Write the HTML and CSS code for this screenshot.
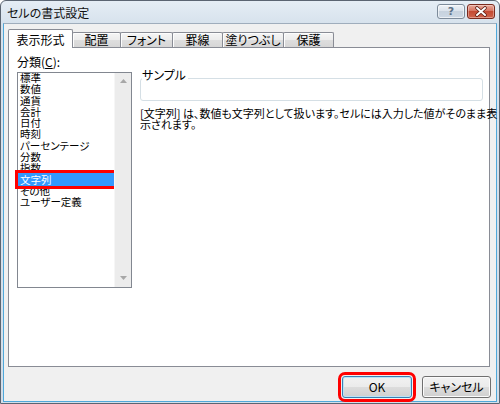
FILE: index.html
```html
<!DOCTYPE html>
<html lang="ja">
<head>
<meta charset="utf-8">
<title>セルの書式設定</title>
<link rel="stylesheet" href="styles.css">
</head>
<body>
<div class="window">
  <div class="titlebar">
    <span class="title">セルの書式設定</span>
    <div class="caption-btns">
      <span class="cap-btn help">?</span>
      <span class="cap-btn close">
        <svg width="26" height="13" viewBox="0 0 26 13">
          <path d="M9 3 L17 10 M17 3 L9 10" stroke="#5a1a12" stroke-width="3.6" stroke-linecap="round" fill="none"/>
          <path d="M9 3 L17 10 M17 3 L9 10" stroke="#ffffff" stroke-width="2" stroke-linecap="round" fill="none"/>
        </svg>
      </span>
    </div>
  </div>
  <div class="client">
    <div class="tabs">
      <div class="tab tab-1 active">表示形式</div>
      <div class="tab tab-2">配置</div>
      <div class="tab tab-3">フォント</div>
      <div class="tab tab-4">罫線</div>
      <div class="tab tab-5">塗りつぶし</div>
      <div class="tab tab-6">保護</div>
    </div>
    <div class="panel">
      <div class="left-col">
        <div class="cat-label">分類(<u>C</u>):</div>
        <div class="listbox">
          <ul class="items">
            <li>標準</li>
            <li>数値</li>
            <li>通貨</li>
            <li>会計</li>
            <li>日付</li>
            <li>時刻</li>
            <li>パーセンテージ</li>
            <li>分数</li>
            <li>指数</li>
            <li class="sel">文字列</li>
            <li>その他</li>
            <li>ユーザー定義</li>
          </ul>
          <div class="scrollbar">
            <svg width="7" height="4" viewBox="0 0 7 4"><path d="M0 4 L3.5 0 L7 4 Z" fill="#a7a7a7"/></svg>
            <svg width="7" height="4" viewBox="0 0 7 4"><path d="M0 0 L7 0 L3.5 4 Z" fill="#a7a7a7"/></svg>
          </div>
        </div>
      </div>
      <div class="right-col">
        <fieldset class="sample">
          <legend>サンプル</legend>
          <div class="sample-body"></div>
        </fieldset>
        <p class="desc">[文字列] は、数値も文字列として扱います。セルには入力した値がそのまま表<br>示されます。</p>
      </div>
    </div>
    <div class="buttons">
      <button class="btn btn-ok">OK</button>
      <button class="btn btn-cancel">キャンセル</button>
    </div>
  </div>
</div>
</body>
</html>
```
FILE: styles.css
```css
html, body {
  margin: 0;
  padding: 0;
  background: #ffffff;
}
body {
  font-family: "Noto Sans CJK JP", "Noto Sans", sans-serif;
  font-feature-settings: "palt";
  font-size: 12px;
  color: #000;
}
.window {
  width: 500px;
  height: 404px;
  box-sizing: border-box;
  border: 1px solid #5b6572;
  border-radius: 6px 6px 0 0;
  background: linear-gradient(#e5edf5, #d6e1ec 24px, #d3dee9);
  padding: 0 2px 1px 2px;
  display: flex;
  flex-direction: column;
}
.titlebar {
  height: 22px;
  display: flex;
  align-items: center;
  justify-content: space-between;
  padding: 0 2px 0 4px;
}
.title {
  font-size: 12px;
  line-height: 14px;
  padding-top: 1px;
  color: #111;
}
.caption-btns {
  display: flex;
  gap: 2px;
  align-self: flex-start;
  margin-top: 3px;
}
.cap-btn {
  box-sizing: border-box;
  width: 28px;
  height: 15px;
  border-radius: 3px;
  display: flex;
  align-items: center;
  justify-content: center;
}
.help {
  border: 1px solid #7d8b9a;
  background: linear-gradient(#eef2f7, #d9e1ea 50%, #c7d2de 50%, #cdd8e4);
  box-shadow: inset 0 0 0 1px rgba(255,255,255,0.6);
  color: #5e7288;
  font-family: "DejaVu Sans", sans-serif;
  font-weight: bold;
  font-size: 11px;
  line-height: 13px;
}
.close {
  border: 1px solid #7a2a1e;
  background: linear-gradient(#e9a99b, #d77562 45%, #c44a33 50%, #d0644c);
  box-shadow: inset 0 0 0 1px rgba(255,255,255,0.35);
}
.client {
  flex: 1;
  background: #f0f0f0;
  border: 1px solid #4fa8da;
  border-top-color: #9fadbc;
  padding: 5px 6px 3px 4px;
  display: flex;
  flex-direction: column;
}
.tabs {
  display: flex;
  align-items: flex-end;
  height: 18px;
}
.tab {
  box-sizing: border-box;
  height: 15px;
  border: 1px solid #898c95;
  border-bottom: none;
  border-radius: 2px 2px 0 0;
  margin-left: -1px;
  text-align: center;
  font-size: 12px;
  line-height: 14px;
  background: linear-gradient(#f5f5f5, #ececec 50%, #dedede 50%, #d6d6d6);
  box-shadow: inset 1px 1px 0 #fdfdfd;
}
.tab.active {
  height: 19px;
  margin-bottom: -1px;
  padding-top: 3px;
  background: #ffffff;
  box-shadow: none;
  position: relative;
  z-index: 1;
}
.tab-1 { width: 65px; margin-left: 0; }
.tab-2 { width: 49px; }
.tab-3 { width: 53px; }
.tab-4 { width: 51px; }
.tab-5 { width: 62px; }
.tab-6 { width: 51px; }
.panel {
  box-sizing: border-box;
  height: 320px;
  border: 1px solid #898c95;
  background: #ffffff;
  display: flex;
}
.left-col {
  padding: 7px 0 0 8px;
}
.cat-label {
  font-size: 12px;
  line-height: 14px;
}
.listbox {
  margin-top: 3px;
  width: 115px;
  height: 216px;
  box-sizing: border-box;
  border: 1px solid #828790;
  display: flex;
}
.items {
  flex: 1;
  list-style: none;
  margin: -1px 0 0;
  padding: 0;
  font-size: 10.5px;
  line-height: 11.3px;
}
.items li {
  padding-left: 2px;
  white-space: nowrap;
}
.items li.sel {
  background: #3399ff;
  color: #ffffff;
  outline: 3px solid #ff0000;
  padding: 1px 0 1px 2px;
  margin: -1px 0;
}
.scrollbar {
  box-sizing: border-box;
  width: 17px;
  background: #ececec;
  border-left: 1px solid #f6f6f6;
  display: flex;
  flex-direction: column;
  justify-content: space-between;
  align-items: center;
  padding: 6px 0 7px;
}
.right-col {
  flex: 1;
  min-width: 0;
  padding: 20px 6px 0 8px;
}
.sample {
  margin: 0;
  padding: 0 0 0 1px;
  min-width: 0;
  border: 1px solid #d5dfe5;
  border-radius: 3px;
}
.sample legend {
  padding: 0 2px 6px 0;
  font-size: 12px;
  line-height: 14px;
}
.sample-body {
  height: 12px;
}
.desc {
  margin: 7px 0 0;
  font-size: 11px;
  letter-spacing: 0;
  line-height: 11px;
  white-space: nowrap;
}
.buttons {
  display: flex;
  justify-content: flex-end;
  gap: 10px;
  margin-top: 9px;
  margin-right: -1px;
}
.btn {
  box-sizing: border-box;
  height: 22px;
  padding: 0;
  font-family: "Noto Sans CJK JP", "Noto Sans", sans-serif;
  font-feature-settings: "palt";
  font-size: 12px;
  line-height: 18px;
  color: #000;
  border: 1px solid #707070;
  border-radius: 3px;
  background: linear-gradient(#f2f2f2, #ebebeb 50%, #dddddd 50%, #cfcfcf);
  box-shadow: inset 0 0 0 1px #fbfbfb;
}
.btn-ok {
  width: 70px;
  border-color: #3c7fb1;
  box-shadow: inset 0 0 0 1px #b8e4f8;
  outline: 3px solid #ff0000;
  outline-offset: 1px;
}
.btn-cancel {
  width: 69px;
}
```
